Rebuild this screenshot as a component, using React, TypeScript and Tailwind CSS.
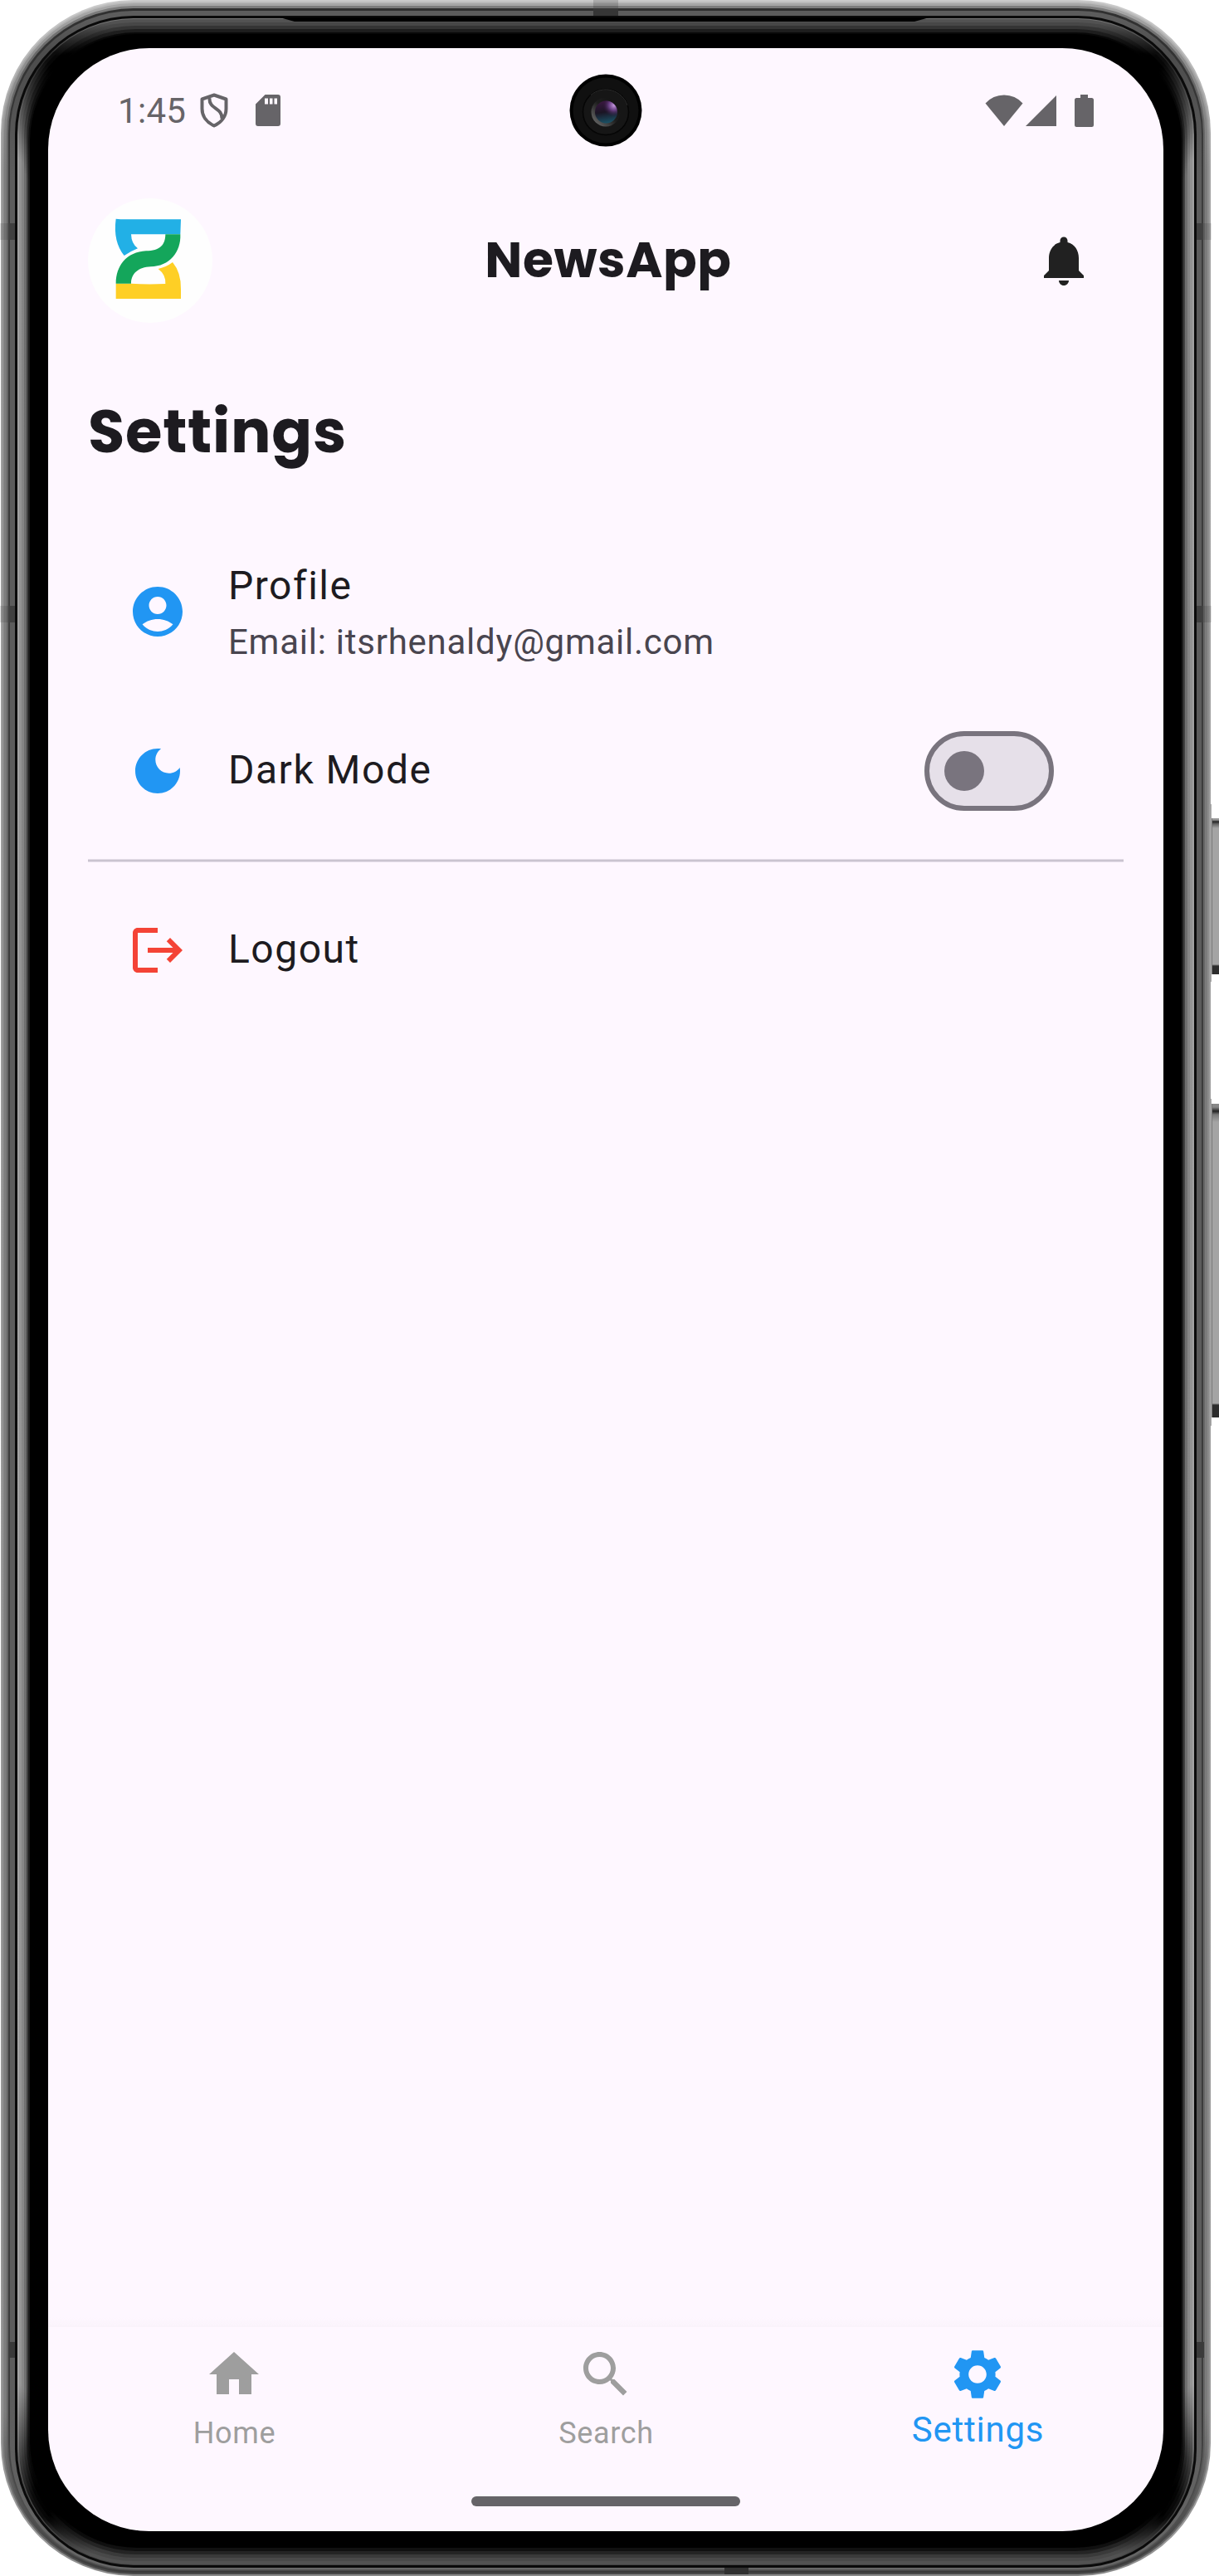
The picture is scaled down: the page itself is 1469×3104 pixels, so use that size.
import type { ReactNode } from "react";

/* Concentric bands of the metal phone body, from the outside in. */
const BEZEL = [
  "p-[2px] rounded-[160px] bg-[linear-gradient(to_bottom,#cacaca_10px,#bdbdbd_60px,#a0a0a0_200px,#989898_2900px,#999_3060px,#8a8a8a_3100px)]",
  "p-[2px] rounded-[158px] bg-[linear-gradient(to_bottom,#bbb_10px,#aaa_60px,#8e8e8e_200px,#888_2900px,#606060_3060px,#4a4a4a_3096px)]",
  "px-[3px] pt-[3px] pb-[2px] rounded-[156px] bg-[linear-gradient(to_bottom,#a6a6a6_10px,#909090_60px,#7c7c7c_200px,#7c7c7c_2900px,#484848_3050px,#3a3a3a_3094px)]",
  "px-[2px] pt-[3px] pb-[1px] rounded-[153px] bg-[linear-gradient(to_bottom,#7c7c7c_5px,#686868_60px,#666_200px,#666_2900px,#4a4a4a_3050px)]",
  "px-[2px] pt-[3px] pb-[1px] rounded-[151px] bg-[linear-gradient(to_bottom,#303030_5px,#3c3c3c_200px,#3c3c3c_2900px,#555_3060px)]",
  "px-[6px] pt-[6px] pb-[2px] rounded-[149px] bg-[linear-gradient(to_bottom,#5c5c5c_10px,#4c4c4c_50px,#5c5c5c_200px,#5c5c5c_2880px,#666_3060px)]",
  "px-[3px] pt-[3px] pb-[3px] rounded-[143px] bg-[#0a0a0a]",
  "px-[2px] pt-[1px] pb-[1px] rounded-[140px] bg-[linear-gradient(to_bottom,#737373_5px,#222_50px,#a0a0a0_170px,#a4a4a4_2850px,#444_2980px,#444_3050px)]",
  "px-[3px] pt-[4px] pb-[4px] rounded-[138px] bg-[linear-gradient(to_bottom,#525252_5px,#0c0c0c_40px,#0c0c0c_50px,#929292_170px,#969696_2850px,#111_2990px,#0c0c0c_3010px,#525252_3055px)]",
  "px-[3px] pt-[4px] pb-[4px] rounded-[135px] bg-[linear-gradient(to_bottom,#474747_5px,#060606_40px,#060606_50px,#848484_170px,#888_2850px,#0a0a0a_2980px,#060606_3010px,#494949_3048px)]",
  "px-[3px] pt-[4px] pb-[4px] rounded-[133px] bg-[linear-gradient(to_bottom,#343434_5px,#000_35px,#000_50px,#6e6e6e_180px,#707070_2850px,#040404_2970px,#000_3000px,#3a3a3a_3040px)]",
  "px-[2px] pt-[4px] pb-[4px] rounded-[131px] bg-[linear-gradient(to_bottom,#1e1e1e_5px,#000_30px,#000_50px,#404040_180px,#404040_2840px,#000_2960px,#000_2990px,#242424_3030px)]",
  "px-[2px] pt-[2px] pb-[4px] rounded-[130px] bg-[linear-gradient(to_bottom,#080808_5px,#000_30px,#000_50px,#1c1c1c_180px,#1c1c1c_2840px,#000_2960px,#000_2990px,#101010_3028px)]",
  "px-[22px] pt-[17px] pb-[20px] rounded-[129px] bg-black",
];

function Bezel({ children }: { children: ReactNode }) {
  return (
    <>
      {BEZEL.reduceRight<ReactNode>(
        (inner, band) => (
          <div className={band}>{inner}</div>
        ),
        children
      )}
    </>
  );
}

function Glyph({ d, className }: { d: string; className: string }) {
  return (
    <svg viewBox="0 0 24 24" fill="currentColor" className={`block size-[72px] shrink-0 ${className}`}>
      <path d={d} />
    </svg>
  );
}

const BELL =
  "M12 22c1.1 0 2-.9 2-2h-4c0 1.1.9 2 2 2zm6-6v-5c0-3.07-1.64-5.64-4.5-6.32V4c0-.83-.67-1.5-1.5-1.5s-1.5.67-1.5 1.5v.68C7.63 5.36 6 7.92 6 11v5l-2 2v1h16v-1l-2-2z";
const ACCOUNT =
  "M12 2C6.48 2 2 6.48 2 12s4.48 10 10 10 10-4.48 10-10S17.52 2 12 2zm0 4c1.93 0 3.5 1.57 3.5 3.5S13.93 13 12 13s-3.5-1.57-3.5-3.5S10.07 6 12 6zm0 14c-2.03 0-4.43-.82-6.14-2.88C7.55 15.8 9.68 15 12 15s4.45.8 6.14 2.12C16.43 19.18 14.03 20 12 20z";
const MOON =
  "M12 3c-4.97 0-9 4.03-9 9s4.03 9 9 9 9-4.03 9-9c0-.46-.04-.92-.1-1.36-.98 1.37-2.58 2.26-4.4 2.26-2.98 0-5.4-2.42-5.4-5.4 0-1.81.89-3.42 2.26-4.4-.44-.06-.9-.1-1.36-.1z";
const LOGOUT =
  "M17 7l-1.41 1.41L18.17 11H8v2h10.17l-2.58 2.58L17 17l5-5zM4 5h8V3H4c-1.1 0-2 .9-2 2v14c0 1.1.9 2 2 2h8v-2H4V5z";
const HOME = "M10 20v-6h4v6h5v-8h3L12 3 2 12h3v8z";
const SEARCH =
  "M15.5 14h-.79l-.28-.27C15.41 12.59 16 11.11 16 9.5 16 5.91 13.09 3 9.5 3S3 5.91 3 9.5 5.91 16 9.5 16c1.61 0 3.09-.59 4.23-1.57l.27.28v.79l5 4.99L20.49 19l-4.99-5zm-6 0C7.01 14 5 11.99 5 9.5S7.01 5 9.5 5 14 7.01 14 9.5 11.99 14 9.5 14z";
const GEAR =
  "M19.14 12.94c.04-.3.06-.61.06-.94 0-.32-.02-.64-.07-.94l2.03-1.58c.18-.14.23-.41.12-.61l-1.92-3.32c-.12-.22-.37-.29-.59-.22l-2.39.96c-.5-.38-1.03-.7-1.62-.94l-.36-2.54c-.04-.24-.24-.41-.48-.41h-3.84c-.24 0-.43.17-.47.41l-.36 2.54c-.59.24-1.13.57-1.62.94l-2.39-.96c-.22-.08-.47 0-.59.22L2.74 8.87c-.12.21-.08.47.12.61l2.03 1.58c-.05.3-.09.63-.09.94s.02.64.07.94l-2.03 1.58c-.18.14-.23.41-.12.61l1.92 3.32c.12.22.37.29.59.22l2.39-.96c.5.38 1.03.7 1.62.94l.36 2.54c.05.24.24.41.48.41h3.84c.24 0 .44-.17.47-.41l.36-2.54c.59-.24 1.13-.56 1.62-.94l2.39.96c.22.08.47 0 .59-.22l1.92-3.32c.12-.22.07-.47-.12-.61l-2.01-1.58zM12 15.6c-1.98 0-3.6-1.62-3.6-3.6s1.62-3.6 3.6-3.6 3.6 1.62 3.6 3.6-1.62 3.6-3.6 3.6z";

function StatusBar() {
  return (
    <div className="flex h-[172px] shrink-0 pl-[84px] pr-[84px] pt-[45px] text-[#666468]">
      <div className="flex h-[60px] items-center">
        <span className="w-[99px] pt-px text-[42px] leading-[60px] tracking-[0.3px]">1:45</span>
        <svg viewBox="0 0 34 42" className="h-[42px] w-[34px]" fill="none" stroke="currentColor" strokeWidth="4">
          <path d="M17 2.5 L31.5 7.5 V19 C31.5 28 26 35.500 17 39.500 C8 35.500 2.500 28 2.500 19 V7.500 Z" strokeLinejoin="round" />
          <path d="M11.500 6 C10.500 20 27 17 26.500 31" />
        </svg>
        <svg viewBox="0 0 30 38" className="ml-[33px] h-[38px] w-[30px]">
          <path
            fill="currentColor"
            fillRule="evenodd"
            d="M11.500 0 H27 a3 3 0 0 1 3 3 V35 a3 3 0 0 1 -3 3 H3 a3 3 0 0 1 -3 -3 V11.500 Z M11 4.500 V11.500 H15 V4.500 Z M17 4.500 V11.500 H20.500 V4.500 Z M22.500 4.500 V11.500 H26 V4.500 Z"
          />
        </svg>
      </div>
      <div className="ml-auto flex h-[60px] items-center">
        <svg viewBox="0 0 46 38" className="h-[38px] w-[46px]" fill="currentColor">
          <path d="M0.500 10.500 Q9.500 0.500 23 0.500 Q36.500 0.500 45.500 10.500 L23 38 Z" />
        </svg>
        <svg viewBox="0 0 37 37" className="ml-[3px] size-[37px]" fill="currentColor">
          <path d="M37 0 V37 H0 Z" />
        </svg>
        <svg viewBox="0 0 23 39" className="ml-[22px] h-[39px] w-[23px]" fill="currentColor">
          <path d="M7 0 H16 V4 H20.500 Q23 4 23 6.500 V36.500 Q23 39 20.500 39 H2.500 Q0 39 0 36.500 V6.500 Q0 4 2.500 4 H7 Z" />
        </svg>
      </div>
    </div>
  );
}

function Camera() {
  return (
    <svg viewBox="0 0 88 88" className="absolute left-[628px] top-[31px] size-[88px]">
      <defs>
        <linearGradient id="lens" x1="0.35" y1="0" x2="0.5" y2="1">
          <stop offset="0" stopColor="#3a1740" />
          <stop offset="0.5" stopColor="#1b1524" />
          <stop offset="1" stopColor="#1a5266" />
        </linearGradient>
        <radialGradient id="glint" cx="0.85" cy="0.2" r="0.5">
          <stop offset="0" stopColor="#c79be0" />
          <stop offset="0.45" stopColor="#7c4c9c" stopOpacity="0.8" />
          <stop offset="1" stopColor="#321540" stopOpacity="0" />
        </radialGradient>
        <linearGradient id="rim" x1="0.1" y1="0.9" x2="0.8" y2="0.2">
          <stop offset="0" stopColor="#686868" />
          <stop offset="0.6" stopColor="#1d1d1d" />
          <stop offset="1" stopColor="#151515" />
        </linearGradient>
      </defs>
      <circle cx="44" cy="44" r="43.500" fill="#000" />
      <circle cx="44" cy="44" r="39.500" fill="#101010" />
      <circle cx="44" cy="46" r="27.500" fill="#161616" stroke="#050505" strokeWidth="1.500" />
      <path d="M26 25.500 A27.500 27.500 0 0 1 70 38" fill="none" stroke="#2c2c2c" strokeWidth="1" />
      <circle cx="44" cy="46" r="17.500" fill="url(#rim)" />
      <circle cx="44.500" cy="46" r="13.500" fill="url(#lens)" />
      <circle cx="44.500" cy="46" r="13.500" fill="url(#glint)" />
    </svg>
  );
}

function Logo() {
  return (
    <div className="size-[150px] overflow-hidden rounded-full bg-[#fefefe]">
      <svg viewBox="318 717 450 450" className="size-full">
        <path fill="#22b0e6" d="M419 791 L436 793 H654 L652 847 H474 Q475 881 498 898 Q471 909 449 924 Q408 873 419 791 Z" />
        <path
          fill="#fecf25"
          d="M419 1025 L474 1025 Q530 1029 598 1026 Q600 993 572 972 Q602 965 624 948 Q655 985 654 1045 L654 1080 H419 Z"
        />
        <path
          fill="#14a65b"
          d="M598 847 H652 C655 912 612 963 545 964 C500 965 474 990 474 1025 H419 C419 960 458 911 528 907 C578 907 598 885 598 847 Z"
        />
      </svg>
    </div>
  );
}

function NavItem({ icon, label, active }: { icon: string; label: string; active?: boolean }) {
  return (
    <div className={`flex flex-1 flex-col items-center pt-[21px] ${active ? "text-[#2196f3]" : "text-[#9e9e9e]"}`}>
      <Glyph d={icon} className="" />
      <span
        className={
          active
            ? "mt-[4px] pl-px text-[42px] leading-[54px] tracking-[0.75px]"
            : "mt-[8px] pl-px text-[36px] leading-[54px] tracking-[0.65px]"
        }
      >
        {label}
      </span>
    </div>
  );
}

function Screen() {
  return (
    <div className="relative flex h-[2992px] w-[1344px] flex-col overflow-hidden rounded-[122px] bg-[#fef7ff] font-[Roboto,sans-serif] text-[#1d1b20]">
      <StatusBar />
      <Camera />

      <header className="flex h-[168px] shrink-0 items-center justify-between px-12">
        <Logo />
        <h1 className="whitespace-nowrap pb-[2px] font-[Poppins,Inter,sans-serif] text-[60px] font-bold leading-[84px] tracking-[0.6px]">
          NewsApp
        </h1>
        <div className="flex w-[144px] justify-center">
          <Glyph d={BELL} className="text-[#212121]" />
        </div>
      </header>

      <main className="flex flex-1 flex-col px-12">
        <h2 className="pb-[55px] pt-[68px] font-[Poppins,Inter,sans-serif] text-[72px] font-bold leading-[108px] tracking-[0.75px]">
          Settings
        </h2>

        <div className="flex h-[216px] items-center gap-[49px] px-12">
          <Glyph d={ACCOUNT} className="text-[#2196f3]" />
          <div className="flex flex-col gap-[2px]">
            <span className="text-[48px] leading-[72px] tracking-[1.5px]">Profile</span>
            <span className="text-[42px] leading-[60px] tracking-[0.75px] text-[#49454f]">
              Email: itsrhenaldy@gmail.com
            </span>
          </div>
        </div>

        <div className="flex h-[168px] items-center gap-[49px] pl-12 pr-[84px]">
          <Glyph d={MOON} className="text-[#2196f3]" />
          <span className="pb-[2px] text-[48px] leading-[72px] tracking-[1.5px]">Dark Mode</span>
          <div className="ml-auto flex h-24 w-[156px] items-center rounded-full border-[6px] border-[#79747e] bg-[#e6e0e9] pl-[18px]">
            <div className="size-12 rounded-full bg-[#79747e]" />
          </div>
        </div>

        <div className="flex h-12 items-center">
          <div className="h-[4px] w-full border-y border-[#e4dde8] bg-[#cac4d0]" />
        </div>

        <div className="flex h-[168px] items-center gap-[49px] px-12">
          <Glyph d={LOGOUT} className="text-[#f44336]" />
          <span className="pb-[2px] text-[48px] leading-[72px] tracking-[1.5px]">Logout</span>
        </div>
      </main>

      <div className="h-3 shrink-0 bg-gradient-to-b from-[#fef7ff] to-[#faf3fb]" />
      <nav className="flex h-[204px] shrink-0">
        <NavItem icon={HOME} label="Home" />
        <NavItem icon={SEARCH} label="Search" />
        <NavItem icon={GEAR} label="Settings" active />
      </nav>
      <div className="mx-auto mb-[30px] h-3 w-[324px] shrink-0 rounded-full bg-[#666468]" />
    </div>
  );
}

export default function App() {
  return (
    <div className="relative h-[3104px] w-[1469px] overflow-hidden bg-white">
      <div className="relative ml-px w-[1458px]">
        <Bezel>
          <Screen />
        </Bezel>
      </div>

      {/* speaker slit */}
      <div className="absolute left-[337px] top-[21px] h-[5px] w-[783px] bg-black [clip-path:polygon(0_0,100%_0,765px_100%,18px_100%)]" />

      {/* antenna lines */}
      <div className="absolute left-0 top-[269px] h-[20px] w-[10px] bg-black/10" />
      <div className="absolute left-[10px] top-[269px] h-[20px] w-[8px] bg-[#404040]" />
      <div className="absolute left-0 top-[730px] h-[20px] w-[10px] bg-black/10" />
      <div className="absolute left-[10px] top-[730px] h-[20px] w-[8px] bg-[#404040]" />
      <div className="absolute left-[10px] top-[2822px] h-[19px] w-[8px] bg-[#3a3a3a]" />
      <div className="absolute left-[1442px] top-[269px] h-[20px] w-[8px] bg-[#404040]" />
      <div className="absolute left-[1450px] top-[269px] h-[20px] w-[10px] bg-black/10" />
      <div className="absolute left-[1442px] top-[730px] h-[20px] w-[8px] bg-[#404040]" />
      <div className="absolute left-[1450px] top-[730px] h-[20px] w-[10px] bg-black/10" />
      <div className="absolute left-[1442px] top-[2822px] h-[19px] w-[9px] bg-[#3a3a3a]" />
      <div className="absolute left-[715px] top-0 h-[10px] w-[30px] bg-black/15" />
      <div className="absolute left-[715px] top-[10px] h-[9px] w-[30px] bg-[#363636]" />
      <div className="absolute left-[873px] top-[3094px] h-[8px] w-[29px] bg-[#303030]" />

      {/* power and volume keys */}
      <div className="absolute left-[1459px] top-[969px] h-[214px] w-px bg-[#aaa]" />
      <div className="absolute left-[1460px] top-[986px] h-[188px] w-[9px] border-l border-[#777] bg-[linear-gradient(to_bottom,#999_2px,#222_4px,#666_7px,#a4a4a4_12px,#a4a4a4_176px,#2c2c2c_178px)]" />
      <div className="absolute left-[1459px] top-[1324px] h-[394px] w-px bg-[#aaa]" />
      <div className="absolute left-[1460px] top-[1330px] h-[378px] w-[9px] border-l border-[#777] bg-[linear-gradient(to_bottom,#888_4px,#222_9px,#777_13px,#a4a4a4_22px,#a4a4a4_361px,#2c2c2c_363px)]" />
    </div>
  );
}
